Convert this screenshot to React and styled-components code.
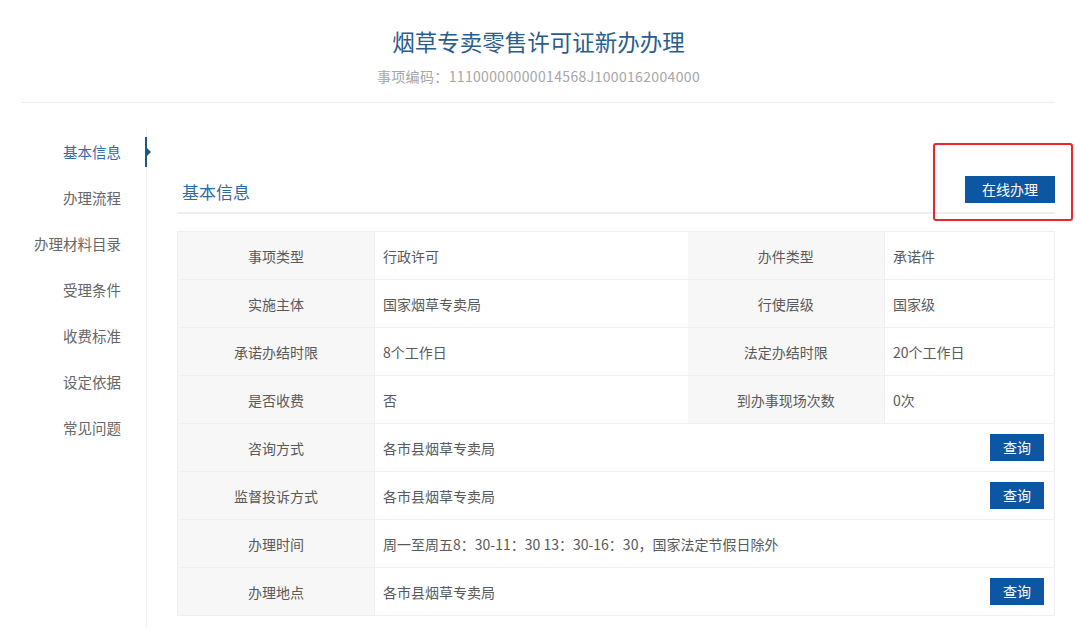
import React from 'react';
import styled, { createGlobalStyle } from 'styled-components';

const GlobalStyle = createGlobalStyle`
  html, body {
    margin: 0;
    padding: 0;
    background: #fff;
  }
  body {
    font-family: "Noto Sans CJK SC", "Noto Sans", sans-serif;
    color: #555;
  }
  * {
    box-sizing: border-box;
  }
`;

const Page = styled('div')`
  width: 1080px;
  height: 629px;
  overflow: hidden;
`;

const Header = styled('header')`
  margin: 0 25px 0 22px;
  padding: 26px 0 16px;
  border-bottom: 1px solid #ececec;
  text-align: center;
`;

const Title = styled('h1')`
  margin: 0;
  font-size: 22.5px;
  line-height: 30px;
  font-weight: normal;
  color: #2b5c8e;
`;

const Code = styled('p')`
  margin: 10px 0 0;
  font-size: 14px;
  line-height: 20px;
  letter-spacing: 0.35px;
  color: #a6a6a6;
`;

const Body = styled('div')`
  display: flex;
  height: 525px;
`;

const Side = styled('nav')`
  width: 147px;
  padding-top: 26px;
  flex-shrink: 0;
`;

const NavList = styled('ul')`
  list-style: none;
  margin: 0;
  padding: 0;
  height: 100%;
  border-right: 1px solid #f1f1f1;
`;

const NavItem = styled('li')`
  position: relative;
  height: 46px;
  line-height: 46px;
  padding-right: 25px;
  text-align: right;
  font-size: 14.5px;
  color: ${(p) => (p.active ? '#2e6aa8' : '#666')};

  ${(p) => p.active && `
    &::after {
      content: '';
      position: absolute;
      right: -1px;
      top: 8px;
      width: 2px;
      height: 30px;
      background: #1f5588;
    }
    &::before {
      content: '';
      position: absolute;
      right: -5px;
      top: 19px;
      border-left: 4px solid #1f5588;
      border-top: 4px solid transparent;
      border-bottom: 4px solid transparent;
    }
  `}
`;

const Content = styled('main')`
  flex: 1;
  padding: 68px 25px 0 30px;
`;

const SectionHead = styled('div')`
  display: flex;
  align-items: center;
  justify-content: space-between;
  height: 43px;
  padding-bottom: 2px;
  border-bottom: 2px solid #eeeeee;
`;

const SectionTitle = styled('h2')`
  margin: 2px 0 0 5px;
  font-size: 17px;
  font-weight: normal;
  color: #2e6aa8;
`;

const Marked = styled('div')`
  position: relative;
  margin-bottom: 2px;
`;

const Highlight = styled('span')`
  position: absolute;
  left: -32px;
  right: -18px;
  top: -33px;
  bottom: -18px;
  border: 2px solid #e8262b;
  border-radius: 3px;
  pointer-events: none;
`;

const Button = styled('button')`
  display: block;
  border: none;
  margin: 0;
  padding: 0;
  width: ${(p) => (p.wide ? '90px' : '54px')};
  height: 27px;
  background-color: #0d56a1;
  color: #fff;
  font-family: inherit;
  font-size: 14px;
  line-height: 27px;
`;

const Table = styled('table')`
  width: 100%;
  margin-top: 17px;
  border-collapse: collapse;
  table-layout: fixed;
  border: 1px solid #efefef;
  font-size: 14px;
  color: #595959;
`;

const Cell = styled('td')`
  height: 48px;
  padding: 0 8px;
  border-top: 1px solid #f0f0f0;
  background: ${(p) => (p.label ? '#f7f7f7' : '#fff')};
  text-align: ${(p) => (p.label ? 'center' : 'left')};
  border-right: ${(p) => (p.label ? '1px solid #efefef' : 'none')};
`;

const Inline = styled('div')`
  display: flex;
  align-items: center;
  justify-content: space-between;
  padding-right: 2px;
`;

const navItems = ['基本信息', '办理流程', '办理材料目录', '受理条件', '收费标准', '设定依据', '常见问题'];

const pairs = [
  ['事项类型', '行政许可', '办件类型', '承诺件'],
  ['实施主体', '国家烟草专卖局', '行使层级', '国家级'],
  ['承诺办结时限', '8个工作日', '法定办结时限', '20个工作日'],
  ['是否收费', '否', '到办事现场次数', '0次'],
];

const wide = [
  ['咨询方式', '各市县烟草专卖局', true],
  ['监督投诉方式', '各市县烟草专卖局', true],
  ['办理时间', '周一至周五8：30-11：30 13：30-16：30，国家法定节假日除外', false],
  ['办理地点', '各市县烟草专卖局', true],
];

export default function App() {
  return (
    <Page>
      <GlobalStyle />
      <Header>
        <Title>烟草专卖零售许可证新办办理</Title>
        <Code>事项编码：11100000000014568J1000162004000</Code>
      </Header>
      <Body>
        <Side>
          <NavList>
            {navItems.map((name, i) => (
              <NavItem key={name} active={i === 0}>{name}</NavItem>
            ))}
          </NavList>
        </Side>
        <Content>
          <SectionHead>
            <SectionTitle>基本信息</SectionTitle>
            <Marked>
              <Highlight />
              <Button wide>在线办理</Button>
            </Marked>
          </SectionHead>
          <Table>
            <colgroup>
              <col style={{ width: 197 }} />
              <col style={{ width: 313 }} />
              <col style={{ width: 197 }} />
              <col />
            </colgroup>
            <tbody>
              {pairs.map((r) => (
                <tr key={r[0]}>
                  <Cell label>{r[0]}</Cell>
                  <Cell>{r[1]}</Cell>
                  <Cell label>{r[2]}</Cell>
                  <Cell>{r[3]}</Cell>
                </tr>
              ))}
              {wide.map(([label, value, query]) => (
                <tr key={label}>
                  <Cell label>{label}</Cell>
                  <Cell colSpan={3}>
                    <Inline>
                      <span>{value}</span>
                      {query && <Button>查询</Button>}
                    </Inline>
                  </Cell>
                </tr>
              ))}
            </tbody>
          </Table>
        </Content>
      </Body>
    </Page>
  );
}
